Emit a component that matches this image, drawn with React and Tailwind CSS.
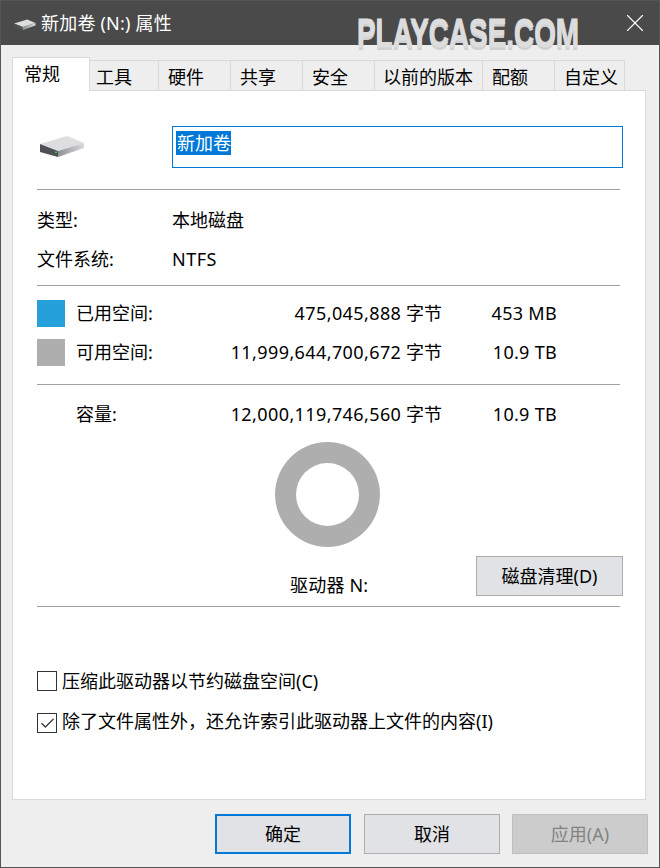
import { Check, X } from 'lucide-react';

const tabs = [
  { label: '工具', width: 'w-[69px] pl-[6px]' },
  { label: '硬件', width: 'w-[72px] pl-[9px]' },
  { label: '共享', width: 'w-[72px] pl-[9px]' },
  { label: '安全', width: 'w-[72px] pl-[9px]' },
  { label: '以前的版本', width: 'w-[108px] pl-[8px]' },
  { label: '配额', width: 'w-[72px] pl-[9px]' },
  { label: '自定义', width: 'w-[70px] pl-[9px]' },
];

// ── Drive icon (same drawing at both sizes) ───────────────────────────
function DriveIcon({ className }) {
  return (
    <svg className={className} viewBox="0 0 45 22">
      <defs>
        <linearGradient id="driveSide" x1="0" y1="0" x2="1" y2="0">
          <stop offset="0" stopColor="#8f9194" />
          <stop offset="1" stopColor="#d8d9db" />
        </linearGradient>
      </defs>
      <polygon points="0,8 27,0 44,7 18,15" fill="#dedee0" />
      <polygon points="0,8 18,15 18,21 0,16" fill="#4f5154" />
      <polygon points="18,15 44,7 44,12 18,21" fill="url(#driveSide)" />
      <rect x="15" y="15.5" width="2" height="1.5" fill="#3fc24f" />
    </svg>
  );
}

function Divider() {
  return <div className="h-px w-[583px] bg-[#a0a0a0]" />;
}

function Bytes({ value }) {
  return (
    <span className="mr-[-1px]">
      <span className="tracking-[0.4px]">{value}</span> 字节
    </span>
  );
}

function SpaceRow({ swatch, label, bytes, size, className }) {
  return (
    <div className={`flex h-[27px] items-center ${className}`}>
      <div className={`h-[27px] w-[28px] ${swatch}`} />
      <div className="flex flex-1 pb-[2px]">
        <span className="ml-[11px] flex-1">{label}</span>
        <Bytes value={bytes} />
        <span className="ml-[49px] mr-[66px] w-[67px] text-right tracking-[0.3px]">{size}</span>
      </div>
    </div>
  );
}

function CheckRow({ checked, label, className, textClass }) {
  return (
    <div className={`flex h-[20px] items-center ${className}`}>
      <div className="flex h-[20px] w-[20px] items-center justify-center border border-[#333333] bg-white">
        {checked && <Check size={17} strokeWidth={1.7} className="text-[#333333]" />}
      </div>
      <span className={`ml-[5px] ${textClass}`}>{label}</span>
    </div>
  );
}

function DialogButton({ children, className }) {
  return (
    <div className={`flex h-[40px] w-[136px] items-center justify-center border pb-[1px] ${className}`}>
      {children}
    </div>
  );
}

export default function App() {
  return (
    <div className="relative flex h-[868px] w-[660px] flex-col overflow-hidden border border-[#555555] bg-[#eeeeee] font-['Noto_Sans','Noto_Sans_CJK_SC',sans-serif] text-[18px] leading-none text-black">
      {/* Title bar */}
      <div className="flex h-[44px] shrink-0 items-center bg-[#4a4a4a] pl-[13px] text-white">
        <DriveIcon className="mt-[4px] h-[12px] w-[22px]" />
        <span className="ml-[5px] tracking-[0.2px]">新加卷 (N:) 属性</span>
        <X size={30} strokeWidth={0.9} className="ml-auto mr-[9px] text-white" />
      </div>

      {/* Watermark */}
      <div className="absolute left-[356px] top-[10px] origin-left scale-x-[0.68] whitespace-nowrap font-['Liberation_Sans',sans-serif] text-[41px] leading-[44px] font-bold text-[#dddddd] [-webkit-text-stroke:1px_#dddddd] [text-shadow:0_3px_0_#d0d0d0]">
        PLAYCASE.COM
      </div>

      {/* Tabs */}
      <div className="mt-[12px] flex h-[33px] shrink-0 items-end pl-[11px]">
        <div className="relative z-10 -mb-px flex h-[34px] w-[78px] items-center border border-b-0 border-[#d9d9d9] bg-white pb-[1px] pl-[11px]">
          常规
        </div>
        {tabs.map((tab) => (
          <div
            key={tab.label}
            className={`flex h-[30px] items-center border-t border-r border-[#d9d9d9] pt-[2px] ${tab.width}`}
          >
            {tab.label}
          </div>
        ))}
      </div>

      {/* Panel */}
      <div className="ml-[11px] h-[710px] w-[634px] shrink-0 border border-[#d9d9d9] bg-white pl-[24px] pr-[22px]">
        <div className="mt-[35px] flex h-[42px] items-center">
          <DriveIcon className="ml-[3px] h-[22px] w-[45px]" />
          <div className="ml-[87px] flex h-[42px] flex-1 items-center border border-[#0078d7] pb-[9px] pl-[3px]">
            <span className="flex h-[24px] items-center bg-[#0078d7] pl-[1px] text-white">新加卷</span>
          </div>
        </div>

        <div className="mt-[21px]"><Divider /></div>

        <div className="mt-[11px] flex h-[39px] items-center pb-[2px]">
          <span className="w-[135px]">类型:</span>
          <span>本地磁盘</span>
        </div>
        <div className="flex h-[39px] items-center pb-[2px]">
          <span className="w-[135px]">文件系统:</span>
          <span className="tracking-[0.5px]">NTFS</span>
        </div>

        <div className="mt-[6px]"><Divider /></div>

        <SpaceRow className="mt-[14px]" swatch="bg-[#26a0da]" label="已用空间:" bytes="475,045,888" size="453 MB" />
        <SpaceRow className="mt-[12px]" swatch="bg-[#aeaeae]" label="可用空间:" bytes="11,999,644,700,672" size="10.9 TB" />

        <div className="mt-[18px]"><Divider /></div>

        <div className="mt-[15px] flex h-[28px] items-center">
          <span className="ml-[39px] flex-1">容量:</span>
          <Bytes value="12,000,119,746,560" />
          <span className="ml-[49px] mr-[66px] w-[67px] text-right tracking-[0.3px]">10.9 TB</span>
        </div>

        {/* Usage ring */}
        <div className="ml-[238px] mt-[14px] flex h-[105px] w-[105px] items-center justify-center rounded-full bg-[#aeaeae]">
          <div className="h-[63px] w-[63px] rounded-full bg-white" />
        </div>

        <div className="mt-[9px] flex h-[40px] items-end">
          <span className="ml-[253px] h-[20px] tracking-[0.2px]">驱动器 N:</span>
          <div className="ml-auto flex h-[40px] w-[147px] items-center justify-center border border-[#adadad] bg-[#e1e2e5]">
            磁盘清理(D)
          </div>
        </div>

        <div className="mt-[10px]"><Divider /></div>

        <CheckRow className="mt-[64px]" label="压缩此驱动器以节约磁盘空间(C)" />
        <CheckRow className="mt-[22px]" textClass="pb-[5px]" checked label="除了文件属性外，还允许索引此驱动器上文件的内容(I)" />
      </div>

      {/* Dialog buttons */}
      <div className="mt-[14px] flex gap-[13px] pl-[214px]">
        <DialogButton className="border-2 border-[#0078d7] bg-[#e1e2e5]">确定</DialogButton>
        <DialogButton className="border-[#adadad] bg-[#e1e2e5]">取消</DialogButton>
        <DialogButton className="-ml-px border-[#bfbfbf] bg-[#cccccc] text-[#838383]">应用(A)</DialogButton>
      </div>
    </div>
  );
}
